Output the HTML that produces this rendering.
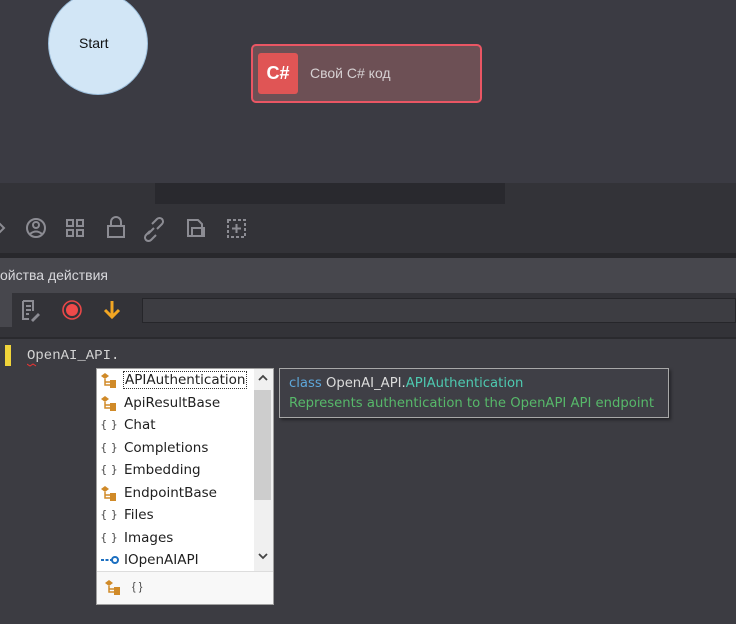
<!DOCTYPE html>
<html><head><meta charset="utf-8"><style>
*{margin:0;padding:0;box-sizing:border-box}
body{width:736px;height:624px;overflow:hidden;background:#3b3b43;font-family:"Liberation Sans","DejaVu Sans",sans-serif;position:relative}
.abs{position:absolute}
.ico{stroke:#8c8c93;fill:none;stroke-width:2}
.list div{height:22.5px;line-height:22.5px;color:#1e1e1e;padding-left:27px;position:relative;font-family:"DejaVu Sans",sans-serif;font-size:13.5px}
.list .ic{position:absolute;left:2px;top:0;width:20px;font-size:11px;color:#444;text-align:center}
.list svg{position:absolute;left:3px;top:4px}
</style></head><body>
<svg width="0" height="0" style="position:absolute"><defs>
<g id="cls"><path d="M1 3 L5 0 L9 3 L5 6 Z" fill="#d08a28"/><path d="M5 6 V12 H10 M5 9 H10" stroke="#d08a28" stroke-width="1.5" fill="none"/><rect x="10" y="7" width="6" height="4" fill="#d08a28"/><rect x="10" y="11" width="6" height="4" fill="#d08a28"/></g>
</defs></svg>
<div class="abs" style="left:48px;top:-8px;width:100px;height:103px;border-radius:50%;background:#d2e6f6;border:1px solid #9cbedb"></div>
<div class="abs" style="left:79px;top:35px;font-size:14px;color:#111">Start</div>
<div class="abs" style="left:251px;top:44px;width:231px;height:59px;border:2px solid #ea5664;border-radius:5px;background:#6d5055"></div>
<div class="abs" style="left:258px;top:53px;width:40px;height:41px;background:#e05555;border-radius:3px;color:#fff;font-weight:bold;font-size:18px;text-align:center;line-height:41px">C#</div>
<div class="abs" style="left:310px;top:65px;font-size:14px;color:#d6d0d2">Свой C# код</div>
<div class="abs" style="left:0;top:183px;width:736px;height:70px;background:#333338"></div>
<div class="abs" style="left:155px;top:183px;width:350px;height:21px;background:#29292e"></div>
<svg class="abs" style="left:0;top:214px" width="260" height="30">
<path class="ico" d="M-2 8 L4 14 L-2 20"/>
<circle class="ico" cx="36" cy="14" r="9"/><circle class="ico" cx="36" cy="11" r="3"/><path class="ico" d="M30 20 Q36 15 42 20"/>
<rect class="ico" x="67" y="6" width="6" height="6"/><rect class="ico" x="77" y="6" width="6" height="6"/><rect class="ico" x="67" y="16" width="6" height="6"/><rect class="ico" x="77" y="16" width="6" height="6"/>
<rect class="ico" x="108" y="12" width="16" height="11"/><path class="ico" d="M111 12 V8 A5 5 0 0 1 121 8 V12"/>
<path class="ico" d="M148 20 L154 14 M152 10 L157 5 A3 3 0 0 1 162 10 L157 15 M150 17 L146 21 A3 3 0 0 0 151 26 L156 21"/>
<path class="ico" d="M188 6 H198 L202 10 V22 H188 Z"/><rect class="ico" x="192" y="14" width="12" height="8"/>
<rect class="ico" x="228" y="6" width="17" height="17" stroke-dasharray="3 2"/><path class="ico" d="M236.5 10 V19 M232 14.5 H241"/>
</svg>
<div class="abs" style="left:0;top:253px;width:736px;height:5px;background:#28282c"></div>
<div class="abs" style="left:0;top:258px;width:736px;height:35px;background:#47474d"></div>
<div class="abs" style="left:0;top:267px;font-size:14px;color:#d8d8dc">ойства действия</div>
<div class="abs" style="left:0;top:293px;width:736px;height:44px;background:#333338"></div>
<div class="abs" style="left:0;top:293px;width:12px;height:34px;background:#47474d"></div>
<div class="abs" style="left:142px;top:298px;width:594px;height:25px;background:#3d3d42;border:1px solid #26262a"></div>
<svg class="abs" style="left:18px;top:298px" width="110" height="26">
<path class="ico" d="M5 3 H15 V13 M5 3 V21 H11 M8 8 H13 M8 12 H13 M8 16 H11" stroke-width="1.6"/><path d="M13 22 L20 15 L22 17 L15 24 Z" fill="#8c8c93"/>
<circle cx="54" cy="12" r="9" fill="none" stroke="#e84848" stroke-width="1.6"/><circle cx="54" cy="12" r="6" fill="#f04a4a"/>
<path d="M94 3 V18 M87 12 L94 19 L101 12" fill="none" stroke="#f2a623" stroke-width="3"/>
</svg>
<div class="abs" style="left:0;top:337px;width:736px;height:2px;background:#2a2a2e"></div>
<div class="abs" style="left:0;top:339px;width:736px;height:285px;background:#3c3c42"></div>
<div class="abs" style="left:5px;top:345px;width:6px;height:21px;background:#f0d43a"></div>
<div class="abs" style="left:27px;top:348px;font-family:'Liberation Mono',monospace;font-size:14px;color:#d4d4d4">OpenAI_API.</div>
<svg class="abs" style="left:27px;top:363px" width="10" height="4"><path d="M0 1 L3 3 L6 1 L9 3" stroke="#e33" fill="none"/></svg>
<div class="abs list" style="left:96px;top:368px;width:178px;height:237px;background:#fff;border:1px solid #a0a0a0">
<div><svg width="18" height="16"><use href="#cls"/></svg><span style="outline:1px dotted #333;padding:0 1px">APIAuthentication</span></div>
<div><svg width="18" height="16"><use href="#cls"/></svg>ApiResultBase</div>
<div><span class="ic">{ }</span>Chat</div>
<div><span class="ic">{ }</span>Completions</div>
<div><span class="ic">{ }</span>Embedding</div>
<div><svg width="18" height="16"><use href="#cls"/></svg>EndpointBase</div>
<div><span class="ic">{ }</span>Files</div>
<div><span class="ic">{ }</span>Images</div>
<div><svg width="20" height="14"><path d="M1 7 H12" stroke="#1c6fc0" stroke-width="2" stroke-dasharray="3 1.5"/><circle cx="15" cy="7" r="3" fill="none" stroke="#1c6fc0" stroke-width="2"/></svg>IOpenAIAPI</div>
</div>
<div class="abs" style="left:254px;top:369px;width:19px;height:202px;background:#f0f0f0"></div>
<div class="abs" style="left:254px;top:390px;width:17px;height:110px;background:#cdcdcd"></div>
<svg class="abs" style="left:256px;top:372px" width="14" height="190"><path d="M3 8 L7 4 L11 8 M3 182 L7 186 L11 182" stroke="#444" stroke-width="1.8" fill="none"/></svg>
<div class="abs" style="left:97px;top:571px;width:176px;height:1px;background:#ddd"></div>
<div class="abs" style="left:97px;top:572px;width:176px;height:32px;background:#f8f8f8"></div>
<svg class="abs" style="left:104px;top:580px" width="18" height="16"><use href="#cls"/></svg>
<div class="abs" style="left:132px;top:581px;font-size:11px;color:#444">{ }</div>
<div class="abs" style="left:279px;top:368px;width:390px;height:50px;background:#3f3f46;border:1px solid #a8a8a8;box-shadow:2px 2px 3px rgba(0,0,0,.4)"></div>
<div class="abs" style="left:289px;top:376px;color:#dcdcdc;font-family:'DejaVu Sans',sans-serif;font-size:13.2px"><span style="color:#5ea7da">class</span> OpenAI_API.<span style="color:#4ec9b0">APIAuthentication</span></div>
<div class="abs" style="left:289px;top:396px;font-family:'DejaVu Sans',sans-serif;font-size:13.2px;color:#57b86a">Represents authentication to the OpenAPI API endpoint</div>
</body></html>
